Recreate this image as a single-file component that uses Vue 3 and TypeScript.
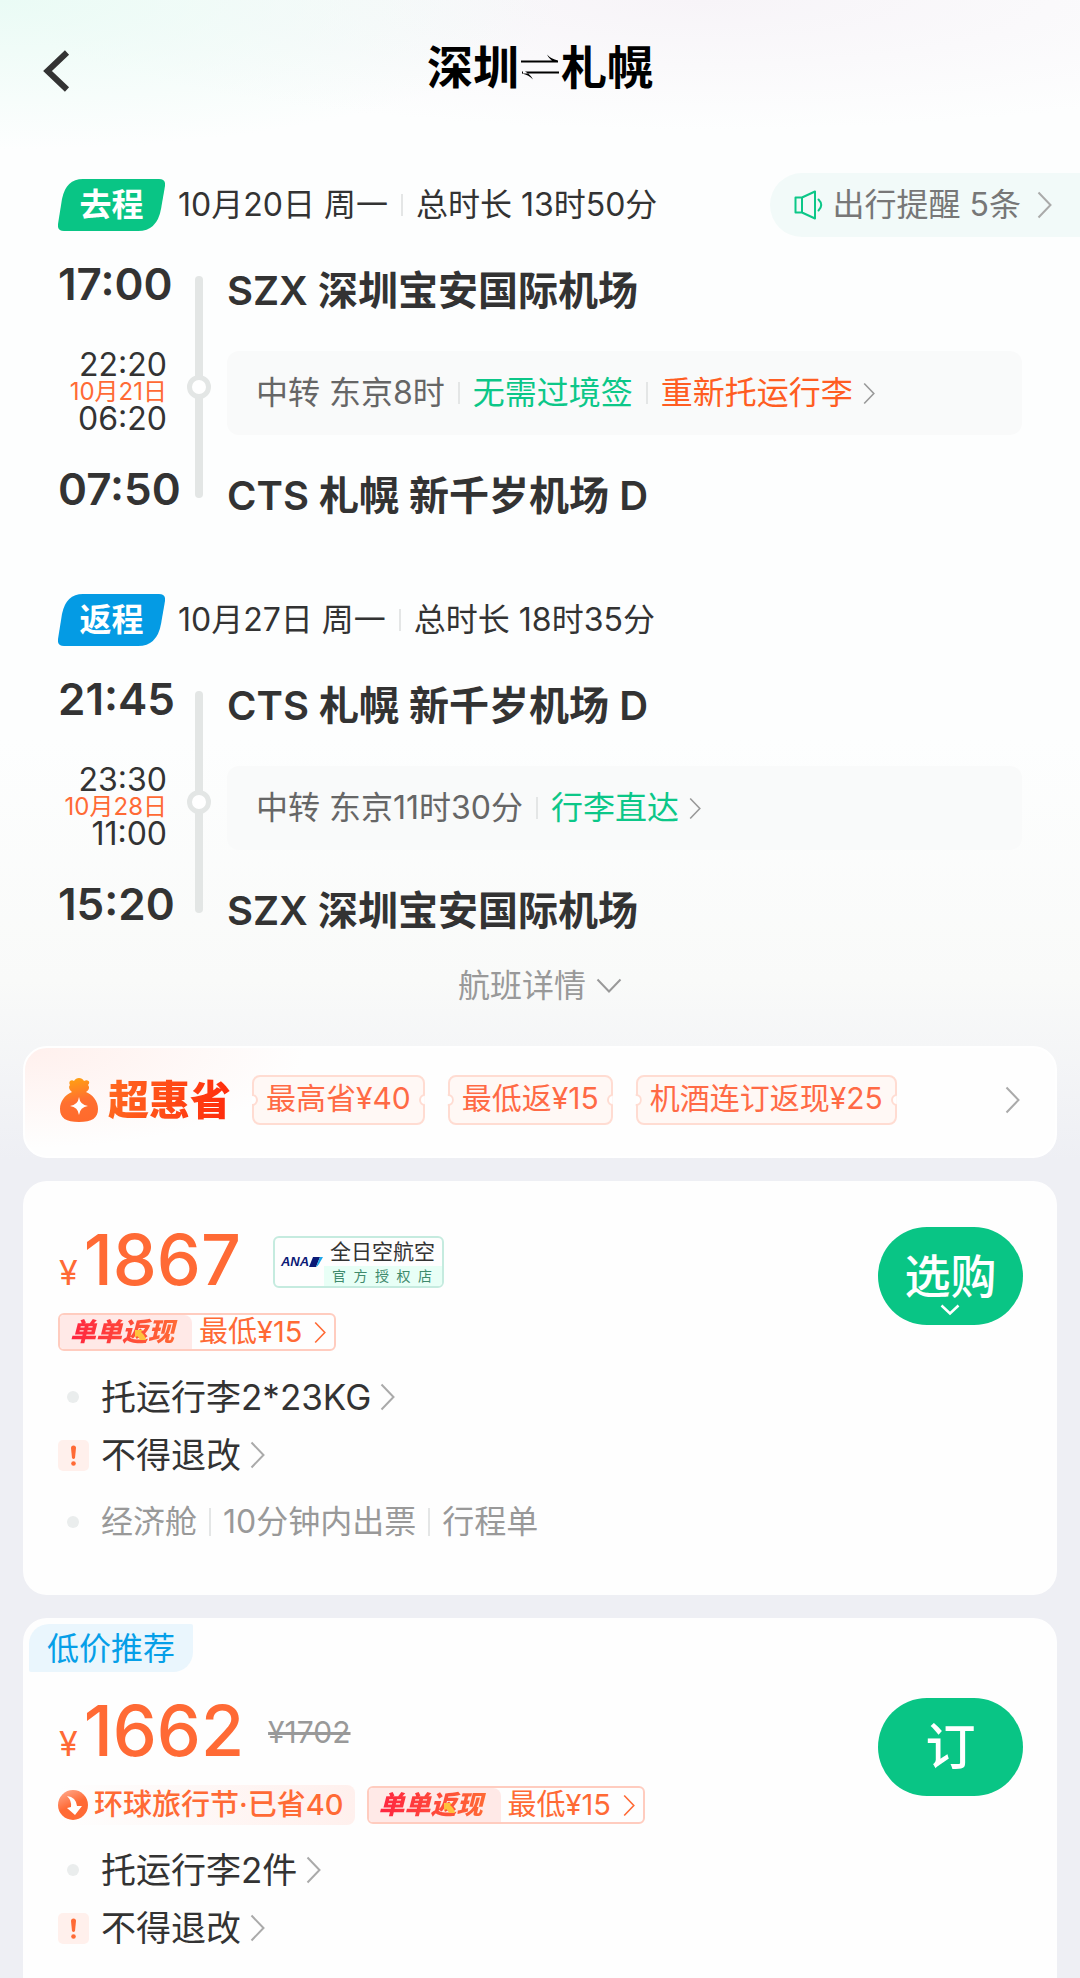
<script setup lang="ts">
interface Leg {
  kind: 'out' | 'back'
  label: string
  date: string
  duration: string
  depart: string
  from: string
  arrive: string
  to: string
  stopIn: string
  stopDate: string
  stopOut: string
  stop: string
  notes: { text: string; tone: 'good' | 'warn' }[]
}

interface Fare {
  badge?: string
  price: string
  was?: string
  airline?: string
  saving?: string
  cashback: string
  baggage: string
  rule: string
  extras: string[]
  action: string
  expandable: boolean
}

const legs: Leg[] = [
  {
    kind: 'out',
    label: '去程',
    date: '10月20日 周一',
    duration: '总时长 13时50分',
    depart: '17:00',
    from: 'SZX 深圳宝安国际机场',
    arrive: '07:50',
    to: 'CTS 札幌 新千岁机场 D',
    stopIn: '22:20',
    stopDate: '10月21日',
    stopOut: '06:20',
    stop: '中转 东京8时',
    notes: [
      { text: '无需过境签', tone: 'good' },
      { text: '重新托运行李', tone: 'warn' },
    ],
  },
  {
    kind: 'back',
    label: '返程',
    date: '10月27日 周一',
    duration: '总时长 18时35分',
    depart: '21:45',
    from: 'CTS 札幌 新千岁机场 D',
    arrive: '15:20',
    to: 'SZX 深圳宝安国际机场',
    stopIn: '23:30',
    stopDate: '10月28日',
    stopOut: '11:00',
    stop: '中转 东京11时30分',
    notes: [{ text: '行李直达', tone: 'good' }],
  },
]

const coupons: string[] = ['最高省¥40', '最低返¥15', '机酒连订返现¥25']

const fares: Fare[] = [
  {
    price: '1867',
    airline: '全日空航空',
    cashback: '最低¥15',
    baggage: '托运行李2*23KG',
    rule: '不得退改',
    extras: ['经济舱', '10分钟内出票', '行程单'],
    action: '选购',
    expandable: true,
  },
  {
    badge: '低价推荐',
    price: '1662',
    was: '¥1702',
    saving: '环球旅行节·已省40',
    cashback: '最低¥15',
    baggage: '托运行李2件',
    rule: '不得退改',
    extras: [],
    action: '订',
    expandable: false,
  },
]
</script>

<template>
  <div class="page">
    <svg class="defs" aria-hidden="true">
      <symbol id="chevron" viewBox="0 0 15 28">
        <path d="M1.5 1.5 13.5 14 1.5 26.5" fill="none" stroke="currentColor" stroke-width="2" />
      </symbol>
    </svg>

    <header class="top">
      <button class="back" type="button" aria-label="返回">
        <svg width="28" height="44" viewBox="0 0 28 44">
          <path d="M25 3.500 5.500 22 25 40.500" fill="none" stroke="#333" stroke-width="6" />
        </svg>
      </button>
      <h1 class="title">
        深圳
        <svg width="42" height="28" viewBox="0 0 42 28" role="img" aria-label="往返">
          <path d="M2 7.500H38V9.500H2ZM28 1.500Q32 6 39 7.500V9.500H36Q30 6 28 1.500Z" fill="#000" />
          <path d="M40 18.500H4V20.500H40ZM14 26.500Q10 22 3 20.500V18.500H6Q12 22 14 26.500Z" fill="#000" />
        </svg>
        札幌
      </h1>
    </header>

    <main class="body">
      <section v-for="leg in legs" :key="leg.kind" class="leg">
        <div class="leg-head">
          <span class="leg-label" :class="leg.kind">
            <svg class="leg-shape" viewBox="0 0 107 52" preserveAspectRatio="none" aria-hidden="true">
              <path d="M25 0H101Q108 0 107 7L103 30Q99 52 80 52H6Q-1 52 0 45L4 20Q8 0 25 0Z" fill="currentColor" />
            </svg>
            <span class="leg-name">{{ leg.label }}</span>
          </span>
          <span>{{ leg.date }}</span>
          <i class="bar"></i>
          <span>{{ leg.duration }}</span>
          <button v-if="leg.kind === 'out'" class="alerts" type="button">
            <svg width="30" height="30" viewBox="0 0 30 30" fill="none" stroke="#0cc788" stroke-width="2" stroke-linejoin="round">
              <path d="M1.500 7.500H8V22.500H1.500ZM8 7.500 21 1.500V28.500L8 22.500Z" />
              <path d="M24.500 9.500Q30 15 24.500 20.500" stroke-linecap="round" />
            </svg>
            <span>出行提醒 5条</span>
            <svg class="chev large"><use href="#chevron" /></svg>
          </button>
        </div>
        <div class="route">
          <time class="clock first">{{ leg.depart }}</time>
          <p class="airport first">{{ leg.from }}</p>
          <div class="stop-times">
            <time>{{ leg.stopIn }}</time>
            <small>{{ leg.stopDate }}</small>
            <time>{{ leg.stopOut }}</time>
          </div>
          <button class="stop" type="button">
            <span>{{ leg.stop }}</span>
            <template v-for="note in leg.notes" :key="note.text">
              <i class="bar"></i>
              <span :class="note.tone">{{ note.text }}</span>
            </template>
            <svg class="chev"><use href="#chevron" /></svg>
          </button>
          <time class="clock last">{{ leg.arrive }}</time>
          <p class="airport last">{{ leg.to }}</p>
          <div class="rail"><i class="node"></i></div>
        </div>
      </section>

      <button class="details" type="button">
        航班详情
        <svg width="26" height="16" viewBox="0 0 26 16">
          <path d="M1.500 1.500 13 13.500 24.500 1.500" fill="none" stroke="#999" stroke-width="2" />
        </svg>
      </button>

      <a class="card promo" href="#promo">
        <svg width="38" height="44" viewBox="0 0 38 44" aria-hidden="true">
          <defs>
            <linearGradient id="bag" x1="0.400" y1="0" x2="0.600" y2="1">
              <stop offset="0" stop-color="#ffa012" />
              <stop offset="0.500" stop-color="#ff7030" />
              <stop offset="1" stop-color="#ff6a2c" />
            </linearGradient>
          </defs>
          <path
            d="M12 14C8 11 9 8 10 7C8 4 11 1 14 3C16 -1 22 -1 24 3C28 1 31 4 28 7C30 9 29 12 26 14C33 17 38 23 38 31C38 40 32 44 19 44S0 40 0 31C0 23 5 17 12 14Z"
            fill="url(#bag)"
          />
          <path d="M19 19Q20 27 28 28Q20 29 19 37Q18 29 10 28Q18 27 19 19Z" fill="#fff" />
        </svg>
        <strong class="promo-name">超惠省</strong>
        <span v-for="coupon in coupons" :key="coupon" class="coupon">{{ coupon }}</span>
        <svg class="chev large end"><use href="#chevron" /></svg>
      </a>

      <article v-for="fare in fares" :key="fare.price" class="card fare" :class="{ recommended: fare.badge }">
        <span v-if="fare.badge" class="badge">{{ fare.badge }}</span>
        <div class="fare-body">
          <div class="fare-info">
            <div class="price-row">
              <span class="price"><span class="yen">¥</span>{{ fare.price }}</span>
              <span v-if="fare.airline" class="store">
                <span class="ana">
                  ANA
                  <svg width="14" height="10" viewBox="0 0 14 10" aria-hidden="true">
                    <path d="M4 0H11L7 10H0Z" fill="#0c1a76" />
                    <path d="M11 0H14L10 7Q8 10 7 10Z" fill="#1ea7ea" />
                  </svg>
                </span>
                <span class="store-name">
                  <span class="store-title">{{ fare.airline }}</span>
                  <span class="store-sub">官方授权店</span>
                </span>
              </span>
              <s v-if="fare.was" class="was">{{ fare.was }}</s>
            </div>

            <div class="tags">
              <span v-if="fare.saving" class="saving">
                <svg width="30" height="30" viewBox="0 0 30 30" aria-hidden="true">
                  <defs>
                    <linearGradient id="coin" x1="0" y1="0" x2="0.500" y2="1">
                      <stop offset="0" stop-color="#ffb096" />
                      <stop offset="0.600" stop-color="#ff6a35" />
                      <stop offset="1" stop-color="#ff6a35" />
                    </linearGradient>
                  </defs>
                  <circle cx="15" cy="15" r="15" fill="url(#coin)" />
                  <path d="M9 6Q18 7 19 16L24 16 17 25 9 18 13 17Q14 11 9 6Z" fill="#fff" />
                </svg>
                {{ fare.saving }}
              </span>
              <button class="cashback" type="button">
                <span class="cashback-mark">
                  <span class="cashback-name">单单返现</span>
                  <svg class="cashback-arrow" width="12" height="12" viewBox="0 0 12 12" aria-hidden="true">
                    <path d="M1 1H9L7 3Q11 6 12 11H6Q5 8 3 7L1 9Z" fill="#ffc23c" />
                  </svg>
                </span>
                <span class="cashback-value">
                  {{ fare.cashback }}
                  <svg class="chev"><use href="#chevron" /></svg>
                </span>
              </button>
            </div>

            <ul class="terms">
              <li>
                <i class="dot"></i>
                <button class="term" type="button">
                  {{ fare.baggage }}<svg class="chev large"><use href="#chevron" /></svg>
                </button>
              </li>
              <li>
                <svg width="31" height="31" viewBox="0 0 31 31" aria-hidden="true">
                  <rect width="31" height="31" rx="5" fill="#fff0ec" />
                  <path d="M13 8Q13 5.500 15.500 5.500T18 8L17 18Q15.500 20 14 18Z" fill="#ff6a35" />
                  <circle cx="15.500" cy="23.500" r="2.300" fill="#ff6a35" />
                </svg>
                <button class="term" type="button">
                  {{ fare.rule }}<svg class="chev large"><use href="#chevron" /></svg>
                </button>
              </li>
              <li v-if="fare.extras.length" class="extras">
                <i class="dot"></i>
                <template v-for="(extra, index) in fare.extras" :key="extra">
                  <i v-if="index" class="bar tall"></i>
                  <span>{{ extra }}</span>
                </template>
              </li>
            </ul>
          </div>

          <button class="buy" :class="{ single: !fare.expandable }" type="button">
            {{ fare.action }}
            <svg v-if="fare.expandable" class="buy-more" width="20" height="12" viewBox="0 0 20 12">
              <path d="M1.500 1.500 10 9.500 18.500 1.500" fill="none" stroke="#fff" stroke-width="2.500" />
            </svg>
          </button>
        </div>
      </article>
    </main>
  </div>
</template>

<style>
body {
  background: #eeeff4;
}
</style>

<style scoped>
.page {
  display: flex;
  flex-direction: column;
  min-height: 100vh;
  overflow: hidden;
  box-sizing: border-box;
  color: #333;
  font: 400 32px/40px Inter, "Noto Sans CJK SC", sans-serif;
  white-space: nowrap;
  background:
    radial-gradient(ellipse 560px 150px at 0 0, #eafbf5, rgba(255, 255, 255, 0)),
    radial-gradient(ellipse 700px 130px at 65% 0, #f7f4f8, rgba(255, 255, 255, 0)),
    linear-gradient(#fdfefe 0, #fdfefe 740px, #f9faf9 980px, #eeeff4 1160px);
}
.defs {
  position: absolute;
  width: 0;
  height: 0;
}
button {
  margin: 0;
  padding: 0;
  border: 0;
  background: none;
  color: inherit;
  font: inherit;
  white-space: nowrap;
  cursor: pointer;
}
svg {
  flex: none;
  display: block;
}
.chev {
  width: 12px;
  height: 23px;
  color: #999;
}
.chev.large {
  width: 15px;
  height: 28px;
  color: #aaa;
}
.top {
  display: grid;
  grid-template-columns: 80px 1fr 80px;
  align-items: center;
  height: 134px;
}
.back {
  justify-self: end;
  padding: 8px 10px 0 0;
}
.title {
  display: flex;
  align-items: center;
  justify-content: center;
  margin: 0;
  color: #000;
  font-size: 46px;
  line-height: 60px;
  font-weight: 600;
}
.body {
  display: flex;
  flex-direction: column;
  flex: 1;
  padding-top: 38px;
}
.leg {
  margin-bottom: 61px;
  padding-left: 58px;
}
.leg-head {
  display: flex;
  align-items: center;
  height: 66px;
  margin-bottom: 22px;
}
.leg-label {
  display: grid;
  place-items: center;
  width: 107px;
  height: 52px;
  margin-right: 13px;
}
.leg-label.out {
  color: #09c585;
}
.leg-label.back {
  padding: 0;
  color: #049be4;
}
.leg-shape {
  grid-area: 1 / 1;
  width: 107px;
  height: 52px;
}
.leg-name {
  grid-area: 1 / 1;
  color: #fff;
  font-weight: 600;
}
.bar {
  flex: none;
  width: 2px;
  height: 22px;
  margin: 0 13px;
  background: #e4e6e6;
}
.bar.tall {
  height: 28px;
  margin: 0 12px;
}
.alerts {
  display: flex;
  align-items: center;
  height: 64px;
  margin-left: auto;
  padding: 0 28px 0 24px;
  border-radius: 32px 0 0 32px;
  background: #f2faf9;
  color: #777;
}
.alerts span {
  margin: 0 16px 0 9px;
}
.route {
  display: grid;
  grid-template-columns: 128px 26px 1fr;
  grid-template-rows: 61px 84px 61px;
  row-gap: 30px;
  padding-right: 58px;
}
.clock {
  grid-column: 1;
  font-size: 44px;
  line-height: 48px;
  font-weight: 600;
}
.airport {
  grid-column: 3;
  margin: 0;
  padding-left: 15px;
  font-size: 40px;
  line-height: 61px;
  font-weight: 600;
}
.first {
  grid-row: 1;
}
.last {
  grid-row: 3;
}
.stop-times {
  display: flex;
  flex-direction: column;
  grid-area: 2 / 1;
  align-items: flex-end;
  padding-right: 19px;
  line-height: 28px;
}
.stop-times small {
  color: #ff6a35;
  font-size: 24px;
  line-height: 26px;
}
.stop {
  display: flex;
  grid-area: 2 / 3;
  align-items: center;
  margin-left: 15px;
  padding-left: 29px;
  border-radius: 12px;
  background: #f9fafa;
  color: #666;
}
.stop .chev {
  margin-left: 10px;
}
.good {
  color: #0cc788;
}
.warn {
  color: #ff5d22;
}
.rail {
  display: grid;
  grid-area: 1 / 2 / 4 / 3;
  place-items: center;
  width: 8px;
  margin: 16px auto 28px;
  border-radius: 4px;
  background: #e3e6e5;
}
.node {
  box-sizing: border-box;
  width: 24px;
  height: 24px;
  margin: 0 -8px;
  border: 5px solid #e3e6e5;
  border-radius: 50%;
  background: #fff;
}
.details {
  display: flex;
  align-items: center;
  align-self: center;
  gap: 10px;
  margin-top: -36px;
  color: #999;
}
.card {
  margin: 0 23px 23px;
  border-radius: 24px;
  background: #fefefe;
}
.promo {
  display: flex;
  align-items: center;
  height: 112px;
  margin-top: 40px;
  padding: 0 35px 4px;
  box-sizing: border-box;
  border: 2px solid #fff;
  color: inherit;
  text-decoration: none;
  background: radial-gradient(ellipse 280px 100px at 0 0, #fff0ed, #fefefe);
}
.promo-name {
  margin: 0 21px 0 10px;
  font-size: 41px;
  line-height: 48px;
  font-weight: 900;
  background: linear-gradient(100deg, #ff6a20, #ff2a0c);
  -webkit-background-clip: text;
  background-clip: text;
  color: transparent;
}
.coupon {
  position: relative;
  box-sizing: border-box;
  height: 50px;
  margin-right: 23px;
  padding: 0 12px;
  border: 2px solid #ffdcd2;
  border-radius: 8px;
  background: #fff8f5;
  color: #ff6a45;
  font-size: 30px;
  line-height: 42px;
}
.coupon::before,
.coupon::after {
  content: "";
  position: absolute;
  top: 17px;
  box-sizing: border-box;
  width: 12px;
  height: 12px;
  border: 2px solid #ffdcd2;
  border-radius: 50%;
  background: #fff;
}
.coupon::before {
  left: -8px;
  clip-path: inset(0 0 0 6px);
}
.coupon::after {
  right: -8px;
  clip-path: inset(0 6px 0 0);
}
.end {
  margin-left: auto;
}
.fare-body {
  display: flex;
  align-items: flex-start;
  justify-content: space-between;
  padding: 46px 34px 48px 35px;
}
.recommended {
  flex: 1;
  margin-bottom: 0;
  padding: 6px 0 0;
  border-radius: 24px 24px 0 0;
}
.recommended .fare-body {
  padding-top: 26px;
  padding-bottom: 0;
}
.badge {
  display: block;
  width: 164px;
  height: 48px;
  margin-left: 6px;
  border-radius: 20px 2px 20px 2px;
  background: #eaf6fd;
  color: #069fe8;
  line-height: 50px;
  text-align: center;
}
.price-row {
  display: flex;
  align-items: center;
  height: 66px;
}
.price {
  color: #ff6a35;
  font-size: 70px;
  line-height: 66px;
  font-weight: 500;
}
.yen {
  margin: 0 6px 0 1px;
  font-size: 34px;
  line-height: 32px;
  font-weight: 400;
}
.store {
  display: flex;
  box-sizing: border-box;
  width: 171px;
  height: 52px;
  margin: 4px 0 0 32px;
  overflow: hidden;
  border: 2px solid #c5ebdf;
  border-radius: 6px;
}
.ana {
  display: flex;
  align-items: center;
  width: 49px;
  padding-left: 6px;
  box-sizing: border-box;
  color: #0c1a76;
  font: italic 700 13px/48px "Liberation Sans", sans-serif;
}
.store-name {
  display: flex;
  flex: 1;
  flex-direction: column;
}
.store-title {
  padding-left: 6px;
  font-size: 21px;
  line-height: 28px;
}
.store-sub {
  flex: 1;
  padding: 0 10px 0 8px;
  background: #e8fff6;
  color: #3f8a6c;
  font-size: 14px;
  line-height: 20px;
  text-align: justify;
  text-align-last: justify;
}
.was {
  margin: 2px 0 0 24px;
  color: #999;
  font-size: 30px;
}
.tags {
  display: flex;
  align-items: center;
  gap: 12px;
  height: 40px;
  margin-top: 19px;
}
.recommended .tags {
  margin-top: 21px;
}
.saving {
  display: flex;
  align-items: center;
  gap: 6px;
  height: 40px;
  padding-right: 11px;
  border-radius: 8px;
  background: linear-gradient(90deg, rgba(255, 240, 237, 0), #fff0ed);
  color: #ff6a35;
  font-size: 29px;
  font-weight: 500;
}
.cashback {
  display: flex;
  box-sizing: border-box;
  height: 38px;
  overflow: hidden;
  border: 2px solid #ffccbf;
  border-radius: 6px;
  color: #ff6a35;
}
.cashback-mark {
  position: relative;
  width: 132px;
  box-sizing: border-box;
  padding-left: 10px;
  border-radius: 0 8px 0 0;
  background: #ffe9e7;
  text-align: left;
}
.cashback-name {
  display: block;
  font-size: 26px;
  line-height: 34px;
  font-weight: 900;
  font-style: italic;
  background: linear-gradient(90deg, #ff2440, #ff6c34 90%);
  -webkit-background-clip: text;
  background-clip: text;
  color: transparent;
}
.cashback-arrow {
  position: absolute;
  top: 14px;
  left: 74px;
}
.cashback-value {
  display: flex;
  align-items: center;
  gap: 12px;
  padding: 0 8px 0 7px;
  font-size: 29px;
  line-height: 34px;
}
.cashback-value .chev {
  color: #ff6a35;
}
.terms {
  display: flex;
  flex-direction: column;
  gap: 8px;
  margin: 20px 0 0;
  padding: 0;
  list-style: none;
}
.terms li {
  display: flex;
  align-items: center;
  height: 50px;
}
.terms li > svg {
  margin-right: 12px;
}
.dot {
  width: 12px;
  height: 12px;
  margin: 0 22px 0 9px;
  border-radius: 50%;
  background: #eaeded;
}
.term {
  display: flex;
  align-items: center;
  gap: 9px;
  font-size: 35px;
  line-height: 50px;
  font-variant-ligatures: no-contextual;
}
.terms .extras {
  margin-top: 9px;
  color: #999;
}
.buy {
  position: relative;
  width: 145px;
  height: 98px;
  border-radius: 49px;
  background: #09c585;
  color: #fff;
  font-size: 46px;
  font-weight: 500;
}
.buy.single {
  font-size: 50px;
}
.buy-more {
  position: absolute;
  bottom: 9px;
  left: 62px;
}
</style>
